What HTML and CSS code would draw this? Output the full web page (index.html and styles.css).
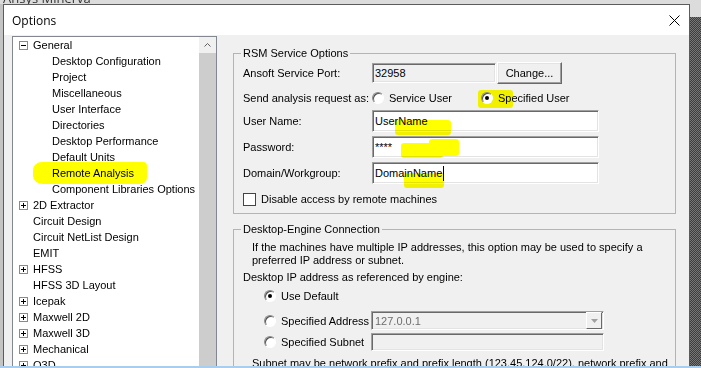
FILE: index.html
```html
<!DOCTYPE html>
<html lang="en">
    <head>
        <meta charset="UTF-8" />
        <title>Options</title>
        <link rel="stylesheet" href="styles.css">
    </head>
    <body>
        <!-- background app title, mostly hidden -->
        <div class="bgbar"><span>Ansys Minerva</span></div>

        <div class="stage">
            <div class="edge"></div>

            <div class="dialog">
                <div class="titlebar">
                    <span class="ttl">Options</span>
                    <svg class="close" width="11" height="11" viewBox="0 0 11 11">
                        <path d="M0.5 0.5 L10.5 10.5 M10.5 0.5 L0.5 10.5" stroke="#000" stroke-width="1" fill="none"/>
                    </svg>
                </div>

                <div class="dbody">
                    <!-- left tree -->
                    <div class="tree">
                        <ul class="list">
                            <li class="top"><svg class="exp" width="9" height="9" viewBox="0 0 9 9"><rect x="0.5" y="0.5" width="8" height="8" fill="#fff" stroke="#8a8a8a"/><path d="M2 4.5 H7" stroke="#000"/></svg>General</li>
                            <li class="sub">Desktop Configuration</li>
                            <li class="sub">Project</li>
                            <li class="sub">Miscellaneous</li>
                            <li class="sub">User Interface</li>
                            <li class="sub">Directories</li>
                            <li class="sub">Desktop Performance</li>
                            <li class="sub">Default Units</li>
                            <li class="sub"><i class="mark m-remote"></i>Remote Analysis</li>
                            <li class="sub">Component Libraries Options</li>
                            <li class="top"><svg class="exp" width="9" height="9" viewBox="0 0 9 9"><rect x="0.5" y="0.5" width="8" height="8" fill="#fff" stroke="#8a8a8a"/><path d="M2 4.5 H7 M4.5 2 V7" stroke="#000"/></svg>2D Extractor</li>
                            <li class="top noexp">Circuit Design</li>
                            <li class="top noexp">Circuit NetList Design</li>
                            <li class="top noexp">EMIT</li>
                            <li class="top"><svg class="exp" width="9" height="9" viewBox="0 0 9 9"><rect x="0.5" y="0.5" width="8" height="8" fill="#fff" stroke="#8a8a8a"/><path d="M2 4.5 H7 M4.5 2 V7" stroke="#000"/></svg>HFSS</li>
                            <li class="top noexp">HFSS 3D Layout</li>
                            <li class="top"><svg class="exp" width="9" height="9" viewBox="0 0 9 9"><rect x="0.5" y="0.5" width="8" height="8" fill="#fff" stroke="#8a8a8a"/><path d="M2 4.5 H7 M4.5 2 V7" stroke="#000"/></svg>Icepak</li>
                            <li class="top"><svg class="exp" width="9" height="9" viewBox="0 0 9 9"><rect x="0.5" y="0.5" width="8" height="8" fill="#fff" stroke="#8a8a8a"/><path d="M2 4.5 H7 M4.5 2 V7" stroke="#000"/></svg>Maxwell 2D</li>
                            <li class="top"><svg class="exp" width="9" height="9" viewBox="0 0 9 9"><rect x="0.5" y="0.5" width="8" height="8" fill="#fff" stroke="#8a8a8a"/><path d="M2 4.5 H7 M4.5 2 V7" stroke="#000"/></svg>Maxwell 3D</li>
                            <li class="top"><svg class="exp" width="9" height="9" viewBox="0 0 9 9"><rect x="0.5" y="0.5" width="8" height="8" fill="#fff" stroke="#8a8a8a"/><path d="M2 4.5 H7 M4.5 2 V7" stroke="#000"/></svg>Mechanical</li>
                            <li class="top"><svg class="exp" width="9" height="9" viewBox="0 0 9 9"><rect x="0.5" y="0.5" width="8" height="8" fill="#fff" stroke="#8a8a8a"/><path d="M2 4.5 H7 M4.5 2 V7" stroke="#000"/></svg>Q3D</li>
                        </ul>
                        <div class="sbar">
                            <div class="sarrow">
                                <svg width="7" height="4" viewBox="0 0 7 4"><polyline points="0.5,3.5 3.5,0.5 6.5,3.5" fill="none" stroke="#606060"/></svg>
                            </div>
                            <div class="thumb"></div>
                        </div>
                    </div>

                    <!-- right settings pane -->
                    <div class="pane">
                        <fieldset class="grp g1">
                            <legend>RSM Service Options</legend>
                            <div class="row r-port">
                                <span class="lbl">Ansoft Service Port:</span>
                                <div class="box port">32958</div>
                                <div class="btn">Change...</div>
                            </div>
                            <div class="row r-send">
                                <span class="lbl">Send analysis request as:</span>
                                <span class="opt o1"><i class="radio"></i>Service User</span>
                                <span class="opt o2"><i class="mark m-spec"></i><i class="radio on"></i>Specified User</span>
                            </div>
                            <div class="row r-user">
                                <span class="lbl">User Name:</span>
                                <div class="box txt">UserName<i class="mark m-user"></i></div>
                            </div>
                            <div class="row r-pwd">
                                <span class="lbl">Password:</span>
                                <div class="box txt">****<i class="mark m-pwd1"></i><i class="mark m-pwd2"></i></div>
                            </div>
                            <div class="row r-dom">
                                <span class="lbl">Domain/Workgroup:</span>
                                <div class="box txt">DomainName<i class="caret"></i><i class="mark m-dom"></i></div>
                            </div>
                            <div class="row r-chk">
                                <i class="chk"></i>Disable access by remote machines
                            </div>
                        </fieldset>

                        <fieldset class="grp g2">
                            <legend>Desktop-Engine Connection</legend>
                            <p class="note">If the machines have multiple IP addresses, this option may be used to specify a<br>preferred IP address or subnet.</p>
                            <p class="r-ip">Desktop IP address as referenced by engine:</p>
                            <div class="row r-def">
                                <span class="opt o3"><i class="radio on"></i>Use Default</span>
                            </div>
                            <div class="row r-addr">
                                <span class="opt o3"><i class="radio"></i>Specified Address</span>
                                <div class="box combo">
                                    <span class="ctext">127.0.0.1</span>
                                    <span class="drop"><svg width="7" height="4" viewBox="0 0 7 4"><polygon points="0,0 7,0 3.5,4" fill="#a0a0a0"/></svg></span>
                                </div>
                            </div>
                            <div class="row r-sub">
                                <span class="opt o3"><i class="radio"></i>Specified Subnet</span>
                                <div class="box subnet"></div>
                            </div>
                            <p class="note note2">Subnet may be network prefix and prefix length (123.45.124.0/22), network prefix and</p>
                        </fieldset>
                    </div>
                </div>
            </div>

            <div class="desk"></div>
        </div>

        <div class="taskbar"></div>
    </body>
</html>
```

FILE: styles.css
```css
* {
    box-sizing: border-box;
}

body {
    margin: 0;
    width: 701px;
    height: 368px;
    overflow: hidden;
    background-color: #dcdcdc;
    font-family: "Liberation Sans", Arial, sans-serif;
    font-size: 11px;
    color: #000;
}

/* background window title */
.bgbar {
    height: 4px;
    overflow: hidden;
    padding-left: 3px;
    background-color: #dcdcdc;
}
.bgbar span {
    display: block;
    margin-top: -8px;
    font-family: "Open Sans", sans-serif;
    font-size: 13px;
    line-height: 13px;
    color: #333;
}

.stage {
    display: flex;
    height: 362px;
}
.edge {
    width: 3px;
    background-color: #c4c4c4;
}
.desk {
    width: 11px;
    background:
        linear-gradient(#dcdcdc 13px, transparent 13px),
        repeating-conic-gradient(#3d3d3d 0 25%, #767676 0 50%) 0 0/2px 2px;
}
.taskbar {
    height: 2px;
    background-color: #a9cdee;
}

/* dialog window */
.dialog {
    width: 687px;
    border: 1px solid #5c5c5c;
    border-bottom: 0;
    background-color: #f0f0f0;
    overflow: hidden;
}
.titlebar {
    height: 30px;
    display: flex;
    align-items: center;
    justify-content: space-between;
    padding: 0 9px 0 8px;
    background-color: #fff;
}
.ttl {
    font-family: "Open Sans", sans-serif;
    font-size: 12px;
}
.close {
    display: block;
}

.dbody {
    display: flex;
    padding: 1px 0 0 8px;
}

/* tree */
.tree {
    width: 205px;
    height: 340px;
    display: flex;
    border: 1px solid #828790;
    background-color: #fff;
}
.list {
    flex: 1;
    margin: 0;
    padding: 0;
    list-style: none;
}
.list li {
    position: relative;
    height: 16px;
    display: flex;
    align-items: center;
    white-space: nowrap;
}
.top {
    padding-left: 6px;
}
.top.noexp {
    padding-left: 20px;
}
.sub {
    padding-left: 39px;
}
.exp {
    display: block;
    margin-right: 5px;
}
.sbar {
    width: 17px;
    display: flex;
    flex-direction: column;
    background-color: #f0f0f0;
}
.sarrow {
    height: 16px;
    display: flex;
    align-items: center;
    justify-content: center;
}
.sarrow svg {
    display: block;
}
.thumb {
    flex: 1;
    background-color: #cdcdcd;
}

/* highlighter marks */
.mark {
    position: absolute;
    background-color: #ffff00;
    mix-blend-mode: multiply;
    border-radius: 3px;
}
.m-remote {
    left: 20px;
    top: -3px;
    width: 114px;
    height: 22px;
    border-radius: 9px 4px 7px 10px / 8px 4px 6px 8px;
}
.m-spec {
    left: -3px;
    top: -2px;
    width: 35px;
    height: 18px;
}
.m-user {
    left: 22px;
    top: 9px;
    width: 56px;
    height: 15px;
}
.m-pwd1 {
    left: 28px;
    top: 6px;
    width: 42px;
    height: 15px;
}
.m-pwd2 {
    left: 56px;
    top: 2px;
    width: 30px;
    height: 17px;
}
.m-dom {
    left: 31px;
    top: 10px;
    width: 40px;
    height: 15px;
}

/* right pane */
.pane {
    width: 443px;
    margin: 11px 0 0 16px;
}
.grp {
    margin: 0;
    min-width: 0;
    border: 1px solid #b4b4b4;
    padding: 0 8px 7px 9px;
}
.grp legend {
    padding: 0 2px;
    margin-left: -2px;
    line-height: 13px;
}
.g2 {
    margin-top: 9px;
    height: 200px;
}

.row {
    display: flex;
    align-items: center;
}
.lbl {
    width: 129px;
    flex: none;
}

/* sunken text box */
.box {
    position: relative;
    display: flex;
    align-items: center;
    padding-left: 2px;
    border: 1px solid;
    border-color: #a0a0a0 #fff #fff #a0a0a0;
    box-shadow: inset 1px 1px 0 #696969, inset -1px -1px 0 #e3e3e3;
    background-color: #fff;
    white-space: nowrap;
}
.r-port {
    height: 22px;
    margin-top: 2px;
}
.port {
    width: 124px;
    height: 20px;
    background-color: #f0f0f0;
}
.btn {
    width: 65px;
    height: 22px;
    margin-left: 1px;
    display: flex;
    align-items: center;
    justify-content: center;
    border: 1px solid;
    border-color: #fff #696969 #696969 #fff;
    box-shadow: inset -1px -1px 0 #a0a0a0, inset 1px 1px 0 #e3e3e3;
    background-color: #f0f0f0;
}

.r-send {
    height: 18px;
    margin-top: 5px;
}
.opt {
    position: relative;
    display: flex;
    align-items: center;
    flex: none;
    white-space: nowrap;
}
.o1 {
    width: 109px;
}

/* radio buttons */
.radio {
    position: relative;
    width: 12px;
    height: 12px;
    margin-right: 5px;
    flex: none;
    border-radius: 50%;
    border: 1px solid;
    border-color: #8a8a8a #fff #fff #8a8a8a;
    box-shadow: inset 1px 1px 0 #505050;
    background-color: #fff;
}
.radio.on::after {
    content: "";
    position: absolute;
    left: 3px;
    top: 3px;
    width: 4px;
    height: 4px;
    border-radius: 50%;
    background-color: #000;
}

.txt {
    width: 227px;
    height: 22px;
}
.r-user {
    margin-top: 3px;
}
.r-pwd,
.r-dom {
    margin-top: 4px;
}
.caret {
    display: inline-block;
    width: 1px;
    height: 15px;
    margin-left: 1px;
    background-color: #000;
}

.r-chk {
    height: 14px;
    margin-top: 8px;
}
.chk {
    width: 13px;
    height: 13px;
    margin-right: 5px;
    border: 1px solid #444;
    background-color: #fff;
}

/* second group */
.note {
    margin: 5px 0 0 9px;
    line-height: 13px;
    white-space: nowrap;
}
.r-ip {
    margin: 4px 0 0;
    line-height: 13px;
}
.r-def {
    height: 14px;
    margin-top: 5px;
}
.o3 {
    width: 128px;
    padding-left: 21px;
}
.r-addr {
    height: 19px;
    margin-top: 8px;
}
.combo {
    width: 233px;
    height: 19px;
    justify-content: space-between;
    padding: 1px;
    padding-left: 3px;
    background-color: #f0f0f0;
}
.ctext {
    color: #6d6d6d;
}
.drop {
    width: 16px;
    height: 17px;
    display: flex;
    align-items: center;
    justify-content: center;
    border: 1px solid;
    border-color: #fff #696969 #696969 #fff;
    background-color: #f0f0f0;
}
.drop svg {
    display: block;
}
.r-sub {
    height: 18px;
    margin-top: 3px;
}
.subnet {
    width: 233px;
    height: 18px;
    background-color: #f0f0f0;
}
.note2 {
    margin-top: 6px;
}
```
